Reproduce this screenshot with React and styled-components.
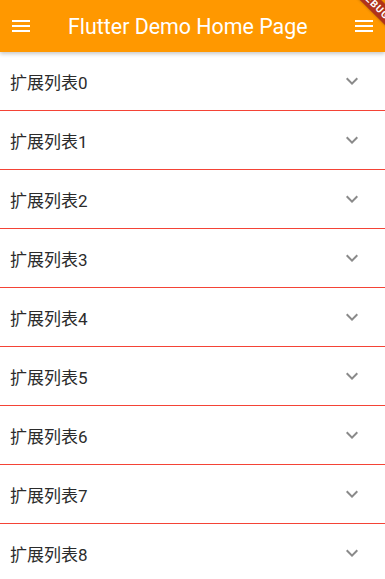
import React from 'react'
import styled, { createGlobalStyle } from 'styled-components'

const Global = createGlobalStyle`
  html, body { margin: 0; padding: 0; background: #fff; }
  body { font-family: Roboto, "Noto Sans CJK SC", sans-serif; overflow: hidden; }
`

const Page = styled.div`
  width: 385px;
  height: 579px;
  position: relative;
  overflow: hidden;
  display: flex;
  flex-direction: column;
`

const AppBar = styled.header`
  height: 52px;
  background: #ff9800;
  display: flex;
  align-items: center;
  padding: 0 9px;
  box-sizing: border-box;
  box-shadow: 0 2px 4px rgba(0,0,0,0.22);
  position: relative;
  z-index: 2;
  flex-shrink: 0;
`

const IconBtn = styled.div`
  width: 24px;
  height: 24px;
  display: flex;
  align-items: center;
  justify-content: center;
  color: #fff;
  flex-shrink: 0;
`

const Title = styled.h1`
  flex: 1;
  margin: 0 0 0 35px;
  font-size: 21.4px;
  font-weight: 400;
  color: #fff;
  font-family: Roboto, sans-serif;
  white-space: nowrap;
`

const Banner = styled.div`
  position: absolute;
  top: -3px;
  right: -35px;
  width: 90px;
  height: 15px;
  background: #b0331b;
  color: #fff;
  font-size: 10px;
  font-weight: 700;
  line-height: 15px;
  text-align: center;
  transform: rotate(45deg);
  z-index: 3;
  font-family: Roboto, sans-serif;
  letter-spacing: 1px;
  box-shadow: 0 0 3px rgba(0,0,0,0.3);
`

const List = styled.div`
  display: flex;
  flex-direction: column;
`

const Row = styled.div`
  height: 58px;
  display: flex;
  align-items: center;
  justify-content: space-between;
  padding: 0 21px 0 10px;
  border-bottom: 1px solid #f44336;
  flex-shrink: 0;
`

const Label = styled.span`
  font-size: 17px;
  color: #2b2b2b;
  font-family: Roboto, "Noto Sans CJK SC", sans-serif;
`

const Menu = () => (
  <svg width="24" height="24" viewBox="0 0 24 24" fill="#fff">
    <path d="M3 18h18v-2H3v2zm0-5h18v-2H3v2zm0-7v2h18V6H3z" />
  </svg>
)

const Chevron = () => (
  <svg width="24" height="24" viewBox="0 0 24 24" fill="#8a8a8a">
    <path d="M16.59 8.59L12 13.17 7.41 8.59 6 10l6 6 6-6z" />
  </svg>
)

const items = Array.from({ length: 10 }, (_, i) => `扩展列表${i}`)

export default function App() {
  return (
    <Page>
      <Global />
      <AppBar>
        <IconBtn><Menu /></IconBtn>
        <Title>Flutter Demo Home Page</Title>
        <IconBtn><Menu /></IconBtn>
      </AppBar>
      <Banner>DEBUG</Banner>
      <List>
        {items.map((t) => (
          <Row key={t}>
            <Label>{t}</Label>
            <Chevron />
          </Row>
        ))}
      </List>
    </Page>
  )
}
